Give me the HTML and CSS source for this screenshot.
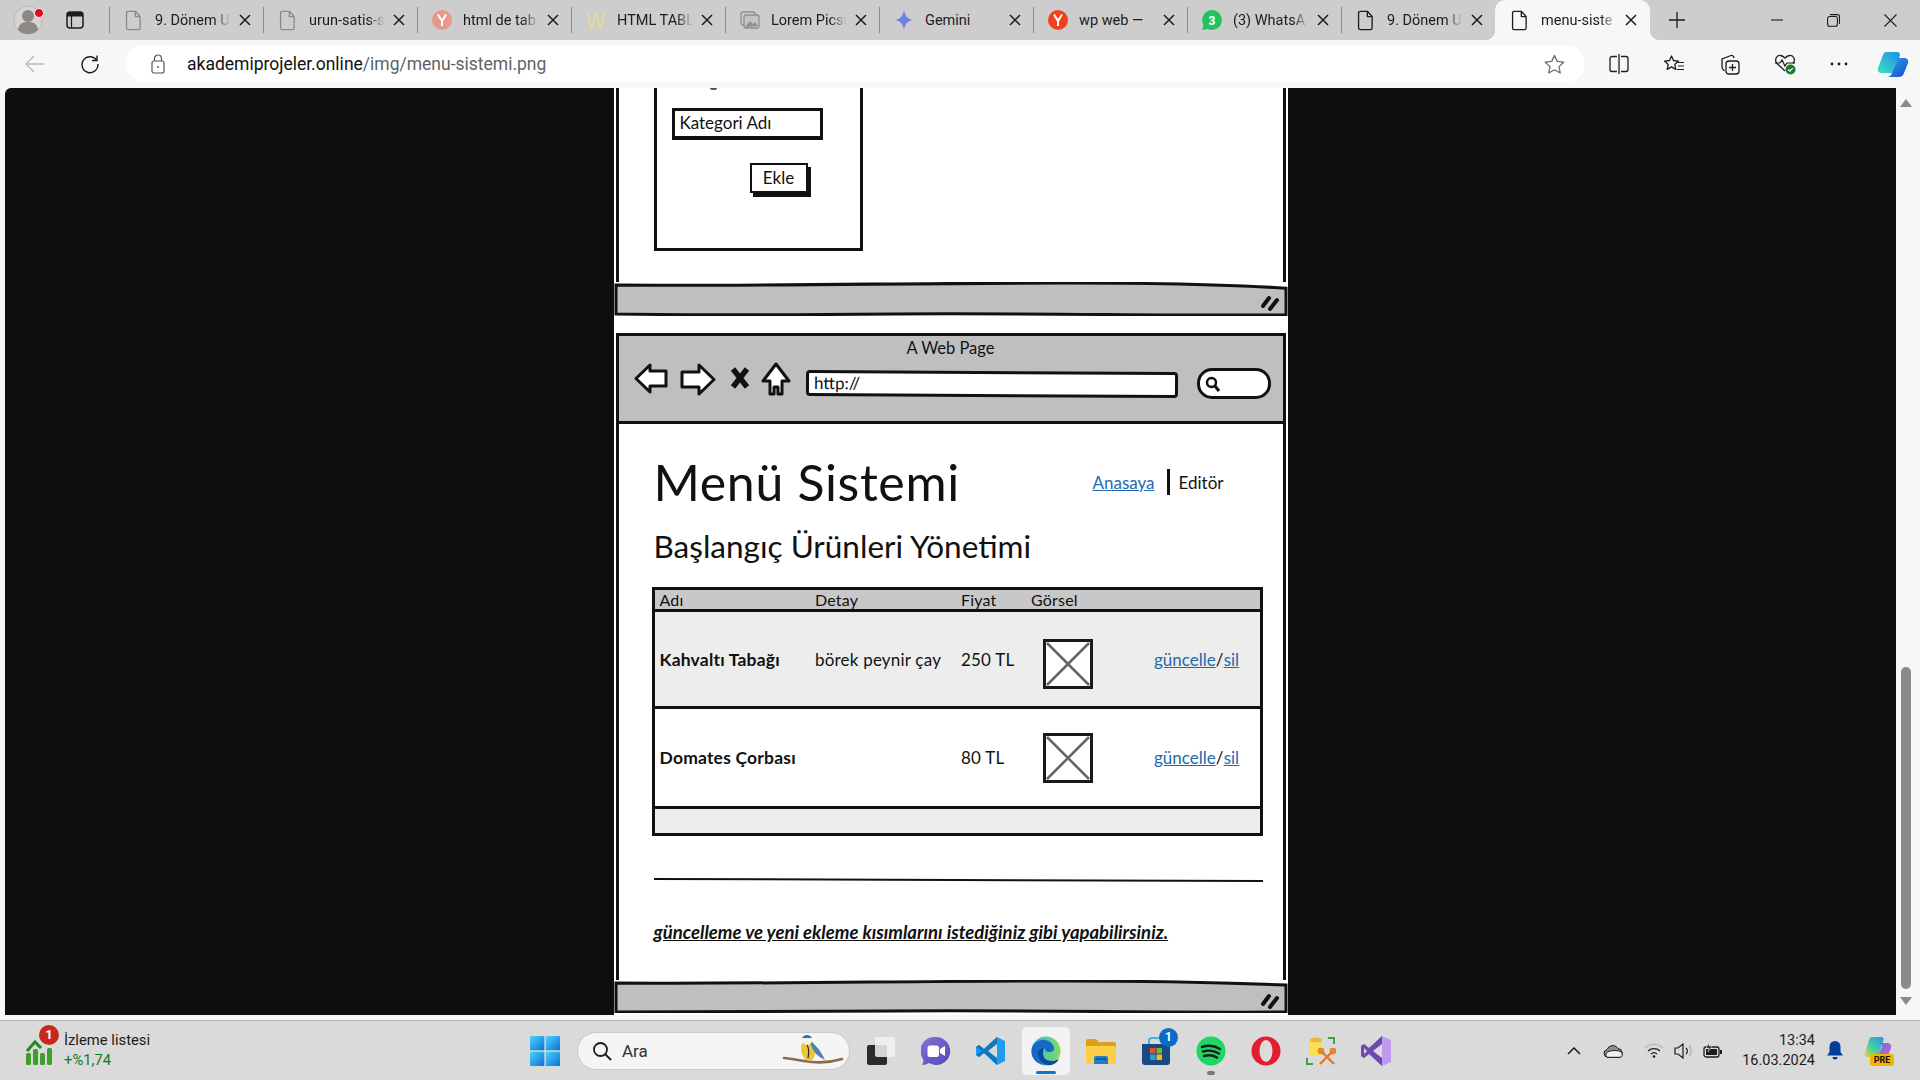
FILE: index.html
```html
<!DOCTYPE html>
<html lang="tr">
<head>
<meta charset="utf-8">
<title>menu-sistemi.png</title>
<link rel="stylesheet" href="styles.css">
</head>
<body>
<svg class="defs" width="0" height="0">
  <symbol id="doc" viewBox="0 0 20 24"><path d="M3.5 1.5h8l5.5 6v13a2 2 0 0 1-2 2H3.500a2 2 0 0 1-2-2v-17a2 2 0 0 1 2-2z M11.500 1.500v6h5.500" fill="none" stroke="currentColor" stroke-width="1.500" stroke-linejoin="round"/></symbol>
  <symbol id="x" viewBox="0 0 12 12"><path d="M1 1l10 10M11 1L1 11" fill="none" stroke="#1c1c1c" stroke-width="1.500"/></symbol>
  <symbol id="imgx" viewBox="0 0 50 50"><rect x="1.500" y="1.500" width="47" height="47" fill="#fff" stroke="#1a1a1a" stroke-width="3"/><path d="M4 4l42 42M46 4L4 46" stroke="#666" stroke-width="2.600" fill="none"/></symbol>
  <symbol id="grip" viewBox="0 0 20 16"><path d="M3 11L9 3M10 14L17 5" stroke="#111" stroke-width="4" fill="none" stroke-linecap="round"/></symbol>
</svg>

<div class="browser">
  <header class="tabstrip">
    <div class="strip-left">
      <div class="profile">
        <svg width="30" height="30" viewBox="0 0 30 30"><circle cx="15" cy="15" r="14" fill="#d6d3d0" stroke="#bdbab7"/><circle cx="15" cy="11" r="6" fill="#8c8885"/><path d="M5 25c1-7 5-8 10-8s9 1 10 8c-3 3-6 4-10 4s-7-1-10-4z" fill="#8c8885"/></svg>
        <span class="dot"></span>
      </div>
      <svg class="sidebar-ico" width="18" height="18" viewBox="0 0 18 18"><rect x="1" y="1" width="16" height="16" rx="3" fill="none" stroke="#1c1c1c" stroke-width="1.500"/><path d="M1 5.500V4a3 3 0 0 1 3-3h10a3 3 0 0 1 3 3v1.500z" fill="#1c1c1c"/><path d="M5.500 5v12" stroke="#1c1c1c" stroke-width="1.200"/></svg>
    </div>
    <div class="tab"><div class="tab-in"><svg class="fav faded" width="17" height="21"><use href="#doc"/></svg><span class="tab-t">9. Dönem U</span><svg class="tab-x" width="12" height="12"><use href="#x"/></svg></div></div>
    <div class="tab"><div class="tab-in"><svg class="fav faded" width="17" height="21"><use href="#doc"/></svg><span class="tab-t">urun-satis-s</span><svg class="tab-x" width="12" height="12"><use href="#x"/></svg></div></div>
    <div class="tab"><div class="tab-in"><svg class="fav" width="20" height="20" viewBox="0 0 20 20"><circle cx="10" cy="10" r="10" fill="#e8988a"/><path d="M6 4.500l4 6.500 4-6.500M10 11v5" stroke="#fff" stroke-width="2" fill="none"/></svg><span class="tab-t">html de tab</span><svg class="tab-x" width="12" height="12"><use href="#x"/></svg></div></div>
    <div class="tab"><div class="tab-in"><svg class="fav" width="20" height="20" viewBox="0 0 20 20"><path d="M1 1l4.500 18L10 4l4.500 15L19 1" stroke="#e8dc90" stroke-width="1.600" fill="none"/></svg><span class="tab-t">HTML TABL</span><svg class="tab-x" width="12" height="12"><use href="#x"/></svg></div></div>
    <div class="tab"><div class="tab-in"><svg class="fav" width="20" height="20" viewBox="0 0 20 20"><rect x="1" y="2" width="14" height="13" rx="2" fill="none" stroke="#8f8f8f" stroke-width="1.300"/><rect x="4" y="5" width="15" height="13" rx="2" fill="#c4c4c4" stroke="#8f8f8f" stroke-width="1.300"/><path d="M5 17l5-6 3 3 2-2 3 4z" fill="#8f8f8f"/></svg><span class="tab-t">Lorem Picsu</span><svg class="tab-x" width="12" height="12"><use href="#x"/></svg></div></div>
    <div class="tab"><div class="tab-in"><svg class="fav" width="20" height="20" viewBox="0 0 20 20"><defs><linearGradient id="gem" x1="0" y1="0" x2="1" y2="1"><stop offset="0" stop-color="#4f8bea"/><stop offset="1" stop-color="#8c78d8"/></linearGradient></defs><path d="M10 0c.8 5.500 3.500 9 8.500 10-5 1-7.700 4.500-8.500 10-.8-5.500-3.500-9-8.500-10 5-1 7.700-4.500 8.500-10z" fill="url(#gem)"/></svg><span class="tab-t plain">Gemini</span><svg class="tab-x" width="12" height="12"><use href="#x"/></svg></div></div>
    <div class="tab"><div class="tab-in"><svg class="fav" width="20" height="20" viewBox="0 0 20 20"><circle cx="10" cy="10" r="10" fill="#f0401c"/><path d="M6 4.500l4 6.500 4-6.500M10 11v5" stroke="#fff" stroke-width="2" fill="none"/></svg><span class="tab-t plain">wp web —</span><svg class="tab-x" width="12" height="12"><use href="#x"/></svg></div></div>
    <div class="tab"><div class="tab-in"><svg class="fav" width="20" height="20" viewBox="0 0 20 20"><path d="M10 0a10 10 0 0 1 0 20 10 10 0 0 1-4.500-1L0 20l1.500-5A10 10 0 0 1 10 0z" fill="#22c35e"/><text x="10" y="14.500" class="wa-num">3</text></svg><span class="tab-t">(3) WhatsA</span><svg class="tab-x" width="12" height="12"><use href="#x"/></svg></div></div>
    <div class="tab"><div class="tab-in"><svg class="fav dark" width="17" height="21"><use href="#doc"/></svg><span class="tab-t">9. Dönem U</span><svg class="tab-x" width="12" height="12"><use href="#x"/></svg></div></div>
    <div class="tab active"><div class="tab-in"><svg class="fav dark" width="17" height="21"><use href="#doc"/></svg><span class="tab-t">menu-siste</span><svg class="tab-x" width="12" height="12"><use href="#x"/></svg></div></div>
    <svg class="plus" width="16" height="16" viewBox="0 0 16 16"><path d="M8 0v16M0 8h16" stroke="#1c1c1c" stroke-width="1.300"/></svg>
    <div class="winctl">
      <svg width="12" height="12" viewBox="0 0 12 12"><path d="M0 6h12" stroke="#1c1c1c" stroke-width="1.100"/></svg>
      <svg width="13" height="13" viewBox="0 0 13 13"><rect x=".6" y="2.500" width="9.800" height="9.800" rx="2" fill="none" stroke="#1c1c1c" stroke-width="1.100"/><path d="M3 .6h7.500a2 2 0 0 1 2 2V10" fill="none" stroke="#1c1c1c" stroke-width="1.100"/></svg>
      <svg width="13" height="13" viewBox="0 0 13 13"><path d="M.5.500l12 12M12.500.500l-12 12" stroke="#1c1c1c" stroke-width="1.100"/></svg>
    </div>
  </header>

  <div class="toolbar">
    <svg class="tool-back" width="20" height="18" viewBox="0 0 20 18"><path d="M9 1L1 9l8 8M1 9h18" fill="none" stroke="#bcbcbc" stroke-width="1.400"/></svg>
    <svg class="tool-reload" width="20" height="20" viewBox="0 0 20 20"><path d="M16.500 6A8 8 0 1 0 18 10" fill="none" stroke="#1c1c1c" stroke-width="1.400"/><path d="M17 1.500V6.500h-5" fill="none" stroke="#1c1c1c" stroke-width="1.400"/></svg>
    <div class="address">
      <svg width="14" height="20" viewBox="0 0 14 20"><rect x="1" y="7" width="12" height="12" rx="2" fill="none" stroke="#555" stroke-width="1.200"/><path d="M3.500 7V4.500a3.500 3.500 0 0 1 7 0V7" fill="none" stroke="#555" stroke-width="1.200"/><circle cx="7" cy="13" r="1" fill="#555"/></svg>
      <span class="url"><b>akademiprojeler.online</b>/img/menu-sistemi.png</span>
      <svg class="star" width="21" height="20" viewBox="0 0 21 20"><path d="M10.500 1.500l2.800 5.900 6.400.8-4.700 4.400 1.200 6.400-5.700-3.200-5.700 3.200 1.200-6.400L1.300 8.200l6.400-.8z" fill="none" stroke="#6b6b6b" stroke-width="1.300" stroke-linejoin="round"/></svg>
    </div>
    <div class="tool-icons">
      <svg width="20" height="20" viewBox="0 0 20 20"><path d="M8 2.500H3a2 2 0 0 0-2 2v11a2 2 0 0 0 2 2h5M12 2.500h5a2 2 0 0 1 2 2v11a2 2 0 0 1-2 2h-5M10 0v20" fill="none" stroke="#1c1c1c" stroke-width="1.300"/></svg>
      <svg width="22" height="20" viewBox="0 0 22 20"><path d="M8.500 2l2 4.500 5 .6-3.700 3.300 1 5-4.300-2.500-4.300 2.500 1-5L1.500 7.100l5-.6z" fill="none" stroke="#1c1c1c" stroke-width="1.300" stroke-linejoin="round"/><path d="M15 8.500h6M15 12h6M14 15.500h7" stroke="#1c1c1c" stroke-width="1.200"/></svg>
      <svg width="21" height="21" viewBox="0 0 21 21"><path d="M3 13V5l9-3.500a2 2 0 0 1 2.400 1l.6 1.500" fill="none" stroke="#1c1c1c" stroke-width="1.300"/><path d="M3 13c0 2 1 3 2.500 4" fill="none" stroke="#1c1c1c" stroke-width="1.300"/><rect x="7" y="7" width="13" height="13" rx="3" fill="none" stroke="#1c1c1c" stroke-width="1.300"/><path d="M13.500 10v7M10 13.500h7" stroke="#1c1c1c" stroke-width="1.300"/></svg>
      <svg width="22" height="22" viewBox="0 0 22 22"><path d="M11 18L3 10.500C0 7 2.500 2 6.500 2.500 8.500 2.700 10 4 11 5c1-1 2.500-2.300 4.500-2.500C19.500 2 22 7 19 10.500" fill="none" stroke="#1c1c1c" stroke-width="1.300"/><path d="M1 10h5l2-3 3 6 2-3h8" fill="none" stroke="#1c1c1c" stroke-width="1.200"/><circle cx="16.500" cy="16.500" r="5" fill="#157f2f"/><path d="M14.200 16.500l1.700 1.700 2.900-3" fill="none" stroke="#fff" stroke-width="1.200"/></svg>
      <svg width="18" height="4" viewBox="0 0 18 4"><circle cx="2" cy="2" r="1.400" fill="#1c1c1c"/><circle cx="9" cy="2" r="1.400" fill="#1c1c1c"/><circle cx="16" cy="2" r="1.400" fill="#1c1c1c"/></svg>
      <svg class="copilot" width="32" height="28" viewBox="0 0 32 28"><defs><linearGradient id="cpa" x1="0" y1="1" x2="1" y2="0"><stop offset="0" stop-color="#3ddfc0"/><stop offset="1" stop-color="#1f8fe8"/></linearGradient><linearGradient id="cpb" x1="0" y1="0" x2="1" y2="1"><stop offset="0" stop-color="#30a8f0"/><stop offset="1" stop-color="#1a48c8"/></linearGradient></defs><path d="M9 2h11c2 0 3 1 3 3l-5 15c-1 2-2 3-4 3H5c-3 0-5-2-4-5L6 5c.5-2 1.500-3 3-3z" fill="url(#cpa)"/><path d="M16 8h11c3 0 5 2 4 5l-4 10c-1 3-3 4-6 4H9c3 0 5-1 6-4l5-11c.5-2-1-4-4-4z" fill="url(#cpb)"/></svg>
    </div>
  </div>

  <main class="viewport">
    <div class="stage">
      <div class="shot">
        <section class="win-top">
          <div class="win-top-body">
            <div class="panel">
              <div class="panel-mark"></div>
              <div class="sk-input">Kategori Adı</div>
              <div class="sk-btn">Ekle</div>
            </div>
          </div>
          <div class="sk-footer">
            <svg class="sk-footer-bg" viewBox="0 0 674 33" preserveAspectRatio="none"><path d="M2 3C150 4 300 1 450 1 540 1 620 3 672 6V32C560 33 420 30 280 31 170 32 70 32 2 31z" fill="#bfbfbf" stroke="#111" stroke-width="3"/></svg>
            <svg class="grip" width="20" height="16"><use href="#grip"/></svg>
          </div>
        </section>

        <section class="win-main">
          <div class="sk-head">
            <div class="sk-title">A Web Page</div>
            <div class="sk-nav">
              <svg class="n-back" width="34" height="31" viewBox="0 0 34 31"><path d="M2 15.500L16 2v6h16v15H16v6z" fill="#fff" stroke="#111" stroke-width="3" stroke-linejoin="round"/></svg>
              <svg class="n-fwd" width="36" height="33" viewBox="0 0 36 33"><path d="M34 16.500L19 2v7H2v15h17v7z" fill="#fff" stroke="#111" stroke-width="3" stroke-linejoin="round"/></svg>
              <svg class="n-stop" width="20" height="22" viewBox="0 0 20 22"><path d="M3 2l14 18M17 2L3 20" stroke="#111" stroke-width="5.500" fill="none"/></svg>
              <svg class="n-home" width="30" height="34" viewBox="0 0 30 34"><path d="M15 2L28 19h-7v13h-4v-7h-4v7H9V19H2z" fill="#fff" stroke="#111" stroke-width="3" stroke-linejoin="round"/></svg>
              <div class="sk-url">http://</div>
              <div class="sk-search"><svg width="16" height="16" viewBox="0 0 16 16"><circle cx="6.500" cy="6.500" r="4.500" fill="none" stroke="#111" stroke-width="2.500"/><path d="M10 10l4 5" stroke="#111" stroke-width="3"/></svg></div>
            </div>
          </div>
          <div class="sk-body">
            <div class="title-row">
              <h1>Menü Sistemi</h1>
              <nav class="crumbs"><a class="link">Anasaya</a><span class="crumb-sep"></span><span class="crumb-cur">Editör</span></nav>
            </div>
            <h2>Başlangıç Ürünleri Yönetimi</h2>
            <table class="sk-table">
              <colgroup><col class="c1"><col class="c2"><col class="c3"><col class="c4"><col class="c5"></colgroup>
              <thead><tr><th>Adı</th><th>Detay</th><th>Fiyat</th><th>Görsel</th><th></th></tr></thead>
              <tbody>
                <tr class="r-a"><td class="name">Kahvaltı Tabağı</td><td>börek peynir çay</td><td>250 TL</td><td class="imgcell"><svg class="ph ph-low" width="50" height="50"><use href="#imgx"/></svg></td><td><a class="link">güncelle</a>/<a class="link">sil</a></td></tr>
                <tr class="r-b"><td class="name">Domates Çorbası</td><td></td><td>80 TL</td><td class="imgcell"><svg class="ph" width="50" height="50"><use href="#imgx"/></svg></td><td><a class="link">güncelle</a>/<a class="link">sil</a></td></tr>
              </tbody>
              <tfoot><tr class="r-f"><td colspan="5"></td></tr></tfoot>
            </table>
            <div class="sk-hr"></div>
            <p class="sk-note">güncelleme ve yeni ekleme kısımlarını istediğiniz gibi yapabilirsiniz.</p>
          </div>
          <div class="sk-footer short">
            <svg class="sk-footer-bg" viewBox="0 0 674 33" preserveAspectRatio="none"><path d="M2 3C150 4 300 1 450 1 540 1 620 3 672 5V32C560 33 420 30 280 31 170 32 70 32 2 32z" fill="#bfbfbf" stroke="#111" stroke-width="3"/></svg>
            <svg class="grip" width="20" height="16"><use href="#grip"/></svg>
          </div>
        </section>
      </div>
    </div>
    <aside class="scrollbar">
      <span class="arrow up"></span>
      <span class="thumb"></span>
      <span class="arrow down"></span>
    </aside>
  </main>

  <footer class="taskbar">
    <div class="widget">
      <div class="widget-ico">
        <svg width="30" height="26" viewBox="0 0 30 26"><path d="M2 12L10 3l6 6" fill="none" stroke="#1e8a24" stroke-width="3"/><rect x="1" y="14" width="5" height="12" rx="1.500" fill="#3f9f2a"/><rect x="8" y="10" width="5" height="16" rx="1.500" fill="#3f9f2a"/><rect x="15" y="14" width="5" height="12" rx="1.500" fill="#3f9f2a"/><rect x="22" y="9" width="5" height="17" rx="1.500" fill="#3f9f2a"/></svg>
        <span class="w-badge">1</span>
      </div>
      <div class="widget-t"><span>İzleme listesi</span><span class="up">+%1,74</span></div>
    </div>
    <div class="center">
      <svg class="start" width="30" height="30" viewBox="0 0 30 30"><defs><linearGradient id="win" x1="0" y1="0" x2="1" y2="1"><stop offset="0" stop-color="#4fd0fa"/><stop offset="1" stop-color="#0a74d8"/></linearGradient></defs><rect width="14.300" height="14.300" fill="url(#win)"/><rect x="15.700" width="14.300" height="14.300" fill="url(#win)"/><rect y="15.700" width="14.300" height="14.300" fill="url(#win)"/><rect x="15.700" y="15.700" width="14.300" height="14.300" fill="url(#win)"/></svg>
      <div class="search">
        <svg width="20" height="20" viewBox="0 0 20 20"><circle cx="8.500" cy="8.500" r="6.500" fill="none" stroke="#1c1c1c" stroke-width="1.800"/><path d="M13 13l6 6" stroke="#1c1c1c" stroke-width="2"/></svg>
        <span>Ara</span>
        <svg class="bird" width="62" height="34" viewBox="0 0 62 34"><path d="M2 24c10 1 18 3 28 4 10 1 20 0 30-3" fill="none" stroke="#8a6a4c" stroke-width="2.500" stroke-linecap="round"/><path d="M20 10c2-4 8-5 11-1 3 5 3 12 0 16-2 2-6 2-8 0-4-4-5-11-3-15z" fill="#e8c83a"/><path d="M28 7c5 3 11 10 15 19l-5-3c-5-3-9-9-10-16z" fill="#4f7fb8"/><circle cx="25" cy="6" r="5" fill="#f3f1e6"/><path d="M20 4c2-4 8-4 10 0z" fill="#2f6fb8"/><path d="M25 11c2 3 2 8 1 13" stroke="#2b2b2b" stroke-width="1.300" fill="none"/></svg>
      </div>
      <div class="apps">
        <div class="app"><svg width="28" height="28" viewBox="0 0 28 28"><rect x="0" y="8" width="20" height="20" rx="2" fill="#2b2b2b"/><rect x="8" y="0" width="20" height="20" rx="2" fill="#f2f2f2" opacity=".85"/></svg></div>
        <div class="app"><svg width="30" height="30" viewBox="0 0 30 30"><defs><linearGradient id="chat" x1="0" y1="0" x2="1" y2="1"><stop offset="0" stop-color="#8a70d8"/><stop offset="1" stop-color="#4f4ab8"/></linearGradient></defs><path d="M15 1a14 14 0 1 1-7 26c-2 1-4 2-7 2 1-2 2-4 1-6A14 14 0 0 1 15 1z" fill="url(#chat)"/><rect x="6.500" y="9.500" width="11.500" height="11.500" rx="2.500" fill="#fff"/><path d="M19 13l5-3v10l-5-3z" fill="#fff"/></svg></div>
        <div class="app"><svg width="30" height="30" viewBox="0 0 30 30"><path d="M21 1l8 4v20l-8 4L8 17 3 21l-3-2v-8l3-2 5 4z" fill="#1f9cf0"/><path d="M21 1L8 13 3 9l-3 2 5.500 4L0 19l3 2 5-4 13 12z" fill="#0b78c4"/><path d="M21 8v14l-9-7z" fill="#d9d9d9"/></svg></div>
        <div class="app current"><svg width="30" height="30" viewBox="0 0 30 30"><defs><linearGradient id="eg1" x1="0" y1="0" x2="1" y2="0"><stop offset="0" stop-color="#35b8e8"/><stop offset="1" stop-color="#7fdc58"/></linearGradient></defs><circle cx="15" cy="15" r="14.500" fill="url(#eg1)"/><path d="M.5 15C1 7 8 3 14 4c6 1 9 5 9 9 0 2-2 3-5 3-4 0-3-3-5-4-5-1-8 5-5 11 1 3 4 6 8 6C7 29 0 23 .5 15z" fill="#1668c4"/><path d="M13 12c-5-1-8 5-5 11 2 5 9 8 15 5 2-1 4-3 5-5-3 2-8 3-12 1-4-2-5-6-3-12z" fill="#0d4a9c"/></svg></div>
        <div class="app"><svg width="30" height="26" viewBox="0 0 30 26"><path d="M0 3a2 2 0 0 1 2-2h8l3 3h15a2 2 0 0 1 2 2v4H0z" fill="#dca11c"/><path d="M0 8h28a2 2 0 0 1 2 2v14a2 2 0 0 1-2 2H2a2 2 0 0 1-2-2z" fill="#fcce4a"/><path d="M8 20a2 2 0 0 1 2-2h10a2 2 0 0 1 2 2v6H8z" fill="#1a7fcc"/><path d="M10 21h10" stroke="#0f4f88" stroke-width="1.500"/></svg></div>
        <div class="app"><svg width="30" height="30" viewBox="0 0 30 30"><path d="M1 8h28v18a3 3 0 0 1-3 3H4a3 3 0 0 1-3-3z" fill="#1a4a80"/><path d="M8 8V5a3 3 0 0 1 3-3h8" fill="none" stroke="#3fb0f0" stroke-width="2"/><rect x="9" y="12" width="5.500" height="5.500" fill="#e8502a"/><rect x="15.500" y="12" width="5.500" height="5.500" fill="#74b82a"/><rect x="9" y="18.500" width="5.500" height="5.500" fill="#1fa2e8"/><rect x="15.500" y="18.500" width="5.500" height="5.500" fill="#f8b818"/></svg><span class="store-badge">1</span></div>
        <div class="app"><svg width="30" height="30" viewBox="0 0 30 30"><circle cx="15" cy="15" r="14.500" fill="#1ed760"/><path d="M6 11c6-2 13-1 18 2M7 15.500c5-1.500 11-1 16 2M8 20c4-1 9-1 13 1.500" stroke="#1b1b1b" stroke-width="2.400" fill="none" stroke-linecap="round"/></svg><span class="run"></span></div>
        <div class="app"><svg width="30" height="30" viewBox="0 0 30 30"><ellipse cx="15" cy="15" rx="14.500" ry="14.500" fill="#e01f30"/><ellipse cx="15" cy="15" rx="6.500" ry="11" fill="#dcdcdc"/></svg></div>
        <div class="app"><svg width="30" height="30" viewBox="0 0 30 30"><path d="M4 4c0-2 12-2 12 0v14c0 2-12 2-12 0z" fill="#f8e050"/><ellipse cx="10" cy="4" rx="6" ry="2.500" fill="#e8b83a"/><path d="M22 2h6v6M1 22v6h6" fill="none" stroke="#3f9f4a" stroke-width="2"/><path d="M14 14l14 14M28 14L14 28" stroke="#e8781c" stroke-width="2.400"/><circle cx="15" cy="15" r="2.500" fill="none" stroke="#e8781c" stroke-width="1.500"/><circle cx="27" cy="15" r="2.500" fill="none" stroke="#e8781c" stroke-width="1.500"/></svg></div>
        <div class="app"><svg width="30" height="30" viewBox="0 0 30 30"><path d="M21 0l9 4v22l-9 4L8 18l-5 4-3-2V10l3-2 5 4z" fill="#c09af0"/><path d="M21 0L8 12 3 8l-3 2v10l3 2 5-4 13 12z" fill="#6c4ab0"/><path d="M21 8v14l-9-7z" fill="#dadada"/><path d="M3 12v6l3-3z" fill="#dadada"/></svg></div>
      </div>
    </div>
    <div class="tray">
      <svg class="t-chev" width="14" height="8" viewBox="0 0 14 8"><path d="M1 7l6-6 6 6" fill="none" stroke="#1c1c1c" stroke-width="1.500"/></svg>
      <svg class="t-cloud" width="21" height="14" viewBox="0 0 21 14"><path d="M5 13.300a4 4 0 0 1-.8-7.900A6 6 0 0 1 15 4.500a4.500 4.500 0 0 1 1 8.800z" fill="#8f8f8f" stroke="#1c1c1c" stroke-width="1"/><path d="M4 13.300a3.500 3.500 0 0 1 2-6c3-1 9-1 11 0a3.500 3.500 0 0 1 1 6z" fill="#f0f0f0" stroke="#1c1c1c" stroke-width="1"/></svg>
      <svg class="t-wifi" width="20" height="15" viewBox="0 0 20 15"><path d="M1 5a13 13 0 0 1 18 0" fill="none" stroke="#b5b5b5" stroke-width="1.300"/><path d="M4 8a9 9 0 0 1 12 0M7 11a4.500 4.500 0 0 1 6 0" fill="none" stroke="#1c1c1c" stroke-width="1.300"/><circle cx="10" cy="13.500" r="1.300" fill="#1c1c1c"/></svg>
      <svg class="t-vol" width="20" height="16" viewBox="0 0 20 16"><path d="M1 5h3l5-4v14l-5-4H1z" fill="none" stroke="#1c1c1c" stroke-width="1.200"/><path d="M12 5a4 4 0 0 1 0 6" fill="none" stroke="#1c1c1c" stroke-width="1.200"/><path d="M15 2.500a8 8 0 0 1 0 11" fill="none" stroke="#b0b0b0" stroke-width="1.200"/></svg>
      <svg class="t-bat" width="20" height="16" viewBox="0 0 20 16"><rect x="1" y="4" width="15" height="10" rx="2" fill="none" stroke="#1c1c1c" stroke-width="1.300"/><rect x="3" y="6" width="11" height="6" fill="#1c1c1c"/><rect x="17" y="7" width="2" height="4" fill="#1c1c1c"/><path d="M6 0L3 5h3l-1 4 4-6H6z" fill="#1c1c1c" stroke="#dadada" stroke-width=".6"/></svg>
      <div class="clock"><span>13:34</span><span>16.03.2024</span></div>
      <svg class="t-bell" width="16" height="19" viewBox="0 0 16 19"><path d="M8 0a5.500 5.500 0 0 1 5.500 5.500V11l2.500 3.500H0L2.500 11V5.500A5.500 5.500 0 0 1 8 0z" fill="#003f9c"/><path d="M5.500 16a2.500 2.500 0 0 0 5 0z" fill="#003f9c"/></svg>
      <div class="t-copilot">
        <svg width="28" height="24" viewBox="0 0 28 24"><defs><linearGradient id="cq" x1="0" y1="1" x2="1" y2="0"><stop offset="0" stop-color="#f2d03a"/><stop offset=".45" stop-color="#40d0a8"/><stop offset="1" stop-color="#2f90e8"/></linearGradient><linearGradient id="cr" x1="0" y1="0" x2="1" y2="1"><stop offset="0" stop-color="#3f80f0"/><stop offset="1" stop-color="#e85ab8"/></linearGradient></defs><path d="M8 1h9c2 0 3 1 2.500 3L15 18c-1 2-2 3-4 3H4c-3 0-4-2-3-4L5 4c.5-2 1.500-3 3-3z" fill="url(#cq)"/><path d="M14 7h9c3 0 5 2 4 5l-3 8c-1 3-3 4-5 4H8c3 0 5-1 6-4l4-9c.5-2-1-4-4-4z" fill="url(#cr)"/></svg>
        <span class="pre">PRE</span>
      </div>
    </div>
  </footer>
</div>
</body>
</html>
```
FILE: styles.css
```css
* { box-sizing: border-box; }
html, body { margin: 0; padding: 0; }
body { width: 1920px; height: 1080px; overflow: hidden; font-family: Roboto, "Liberation Sans", sans-serif; color: #1c1c1c; background: #f7f7f7; }
.defs { display: block; height: 0; }
.browser { display: flex; flex-direction: column; height: 1080px; }

/* tab strip */
.tabstrip { display: flex; align-items: stretch; height: 40px; background: #cdcdcd; flex: none; }
.strip-left { width: 109px; flex: none; display: flex; align-items: center; padding-left: 13px; }
.profile { position: relative; width: 30px; height: 30px; }
.profile svg { display: block; }
.dot { position: absolute; left: 21px; top: 3px; width: 10px; height: 10px; border-radius: 50%; background: #e00b1c; border: 1px solid #eee; }
.sidebar-ico { margin-left: 23px; }
.tab { width: 154px; flex: none; display: flex; align-items: center; }
.tab-in { width: 100%; height: 26px; border-left: 1px solid #8b8b8b; display: flex; align-items: center; padding-left: 14px; font-size: 14.500px; }
.fav { flex: none; width: 20px; }
.fav.faded { color: #8a8a8a; }
.fav.dark { color: #1c1c1c; }
.tab-t { width: 76px; margin: 0 6px 0 11px; white-space: nowrap; -webkit-mask-image: linear-gradient(90deg, #000 78%, transparent 100%); mask-image: linear-gradient(90deg, #000 78%, transparent 100%); }
.tab-t.plain { -webkit-mask-image: none; mask-image: none; }
.tab-x { flex: none; margin-left: 2px; }
.wa-num { font: 700 12px Roboto, sans-serif; fill: #fff; text-anchor: middle; }
.tab.active { width: 155px; background: #f7f7f7; border-radius: 10px 10px 0 0; position: relative; }
.tab.active .tab-in { border-left: 0; padding-left: 15px; }
.tab.active::before, .tab.active::after { content: ""; position: absolute; bottom: 0; width: 10px; height: 10px; }
.tab.active::before { left: -10px; background: radial-gradient(circle at 0 0, transparent 10px, #f7f7f7 10.500px); }
.tab.active::after { right: -10px; background: radial-gradient(circle at 100% 0, transparent 10px, #f7f7f7 10.500px); }
.plus { align-self: center; margin-left: 19px; flex: none; }
.winctl { margin-left: auto; display: flex; align-items: center; padding-right: 23px; gap: 44px; }

/* toolbar */
.toolbar { height: 48px; flex: none; background: #f7f7f7; display: flex; align-items: center; padding-left: 25px; }
.tool-back { flex: none; }
.tool-reload { flex: none; margin-left: 35px; }
.address { width: 1459px; height: 37px; margin-left: 26px; margin-top: -1px; background: #fff; border-radius: 19px; display: flex; align-items: center; padding-left: 25px; padding-right: 20px; flex: none; }
.url { margin-left: 22px; font-size: 17.500px; color: #5f6368; white-space: nowrap; }
.url b { font-weight: 400; color: #111; }
.star { margin-left: auto; }
.tool-icons { display: flex; align-items: center; margin-left: 24px; gap: 34px; }
.tool-icons svg { flex: none; }
.copilot { margin-left: -5px; }

/* viewport */
.viewport { height: 927px; flex: none; display: flex; padding-left: 5px; background: #f7f7f7; }
.stage { width: 1891px; height: 927px; background: #0e0e0e; border-radius: 6px 0 0 0; display: flex; justify-content: center; overflow: hidden; }
.shot { width: 674px; height: 927px; background: #fff; display: flex; flex-direction: column; color: #111; font-family: Lato, "Noto Sans", sans-serif; }
.scrollbar { width: 24px; height: 927px; display: flex; flex-direction: column; align-items: center; padding-right: 4px; background: #f7f7f7; }
.arrow { width: 0; height: 0; border-left: 6px solid transparent; border-right: 6px solid transparent; }
.arrow.up { border-bottom: 8px solid #8a8a8a; margin-top: 11px; }
.thumb { width: 10px; height: 322px; background: #8a8a8a; border-radius: 5px; margin-top: 560px; }
.arrow.down { border-top: 8px solid #8a8a8a; margin-top: 8px; }

/* wireframe */
.win-top { flex: none; height: 228px; display: flex; flex-direction: column; }
.win-top-body { height: 194px; margin: 0 2px; border-left: 3px solid #111; border-right: 3px solid #111; padding-left: 35px; flex: none; }
.panel { width: 209px; height: 163px; border: 3px solid #111; border-top: 0; overflow: hidden; padding-left: 14px; }
.panel-mark { width: 7px; height: 2px; margin-left: 39px; background: #555; border-radius: 0 0 4px 4px; }
.sk-input { width: 151px; height: 32px; margin: 18px 0 0 1px; border: 3px solid #111; border-bottom-width: 4px; font-size: 17px; line-height: 23px; padding-left: 5px; white-space: nowrap; }
.sk-btn { width: 58px; height: 30px; margin: 23px 0 0 79px; border: 2px solid #111; box-shadow: 3px 4px 0 #111; font-size: 17px; line-height: 25px; text-align: center; }
.sk-footer { position: relative; height: 34px; flex: none; }
.sk-footer.short { height: 33px; }
.sk-footer-bg { position: absolute; left: 0; top: 0; width: 674px; height: 100%; }
.grip { position: absolute; right: 8px; top: 13px; }

.win-main { margin-top: 17px; flex: none; display: flex; flex-direction: column; }
.sk-head { height: 91px; margin: 0 2px; background: #bfbfbf; border: 3px solid #111; display: flex; flex-direction: column; }
.sk-title { height: 26px; line-height: 24px; text-align: center; font-size: 16.500px; }
.sk-nav { display: flex; align-items: flex-start; padding-left: 15px; }
.n-back { margin-top: 1px; }
.n-fwd { margin-top: 1px; margin-left: 12px; }
.n-stop { margin-top: 5px; margin-left: 14px; }
.n-home { margin-top: 0; margin-left: 11px; }
.sk-url { width: 372px; height: 26px; margin-left: 15px; margin-top: 9px; background: #fff; border: 3px solid #111; border-radius: 4px; font-size: 17px; line-height: 19px; padding-left: 5px; transform: rotate(.3deg); }
.sk-search { width: 74px; height: 31px; margin-left: 19px; margin-top: 6px; background: #fff; border: 3px solid #111; border-radius: 15px; display: flex; align-items: center; padding-left: 5px; }
.sk-body { height: 556px; margin: 0 2px; border-left: 3px solid #111; border-right: 3px solid #111; padding-left: 35px; display: flex; flex-direction: column; }
.title-row { display: flex; align-items: center; height: 60px; margin-top: 28px; }
h1 { margin: 0; width: 439px; flex: none; font-size: 50px; letter-spacing: .65px; font-weight: 400; line-height: 60px; white-space: nowrap; }
.crumbs { display: flex; align-items: center; font-size: 17px; }
.crumb-sep { width: 3px; height: 26px; background: #111; margin: 0 9px 0 12px; }
.link { color: #2468b0; text-decoration: underline; letter-spacing: 0; }
h2 { margin: 15px 0 0; font-size: 31.500px; font-weight: 400; line-height: 39px; white-space: nowrap; }
.sk-table { margin: 21px 0 0 -2px; width: 608px; table-layout: fixed; border-collapse: collapse; border: 3px solid #111; font-size: 17px; letter-spacing: .2px; flex: none; }
.c1 { width: 157px; } .c2 { width: 146px; } .c3 { width: 70px; } .c4 { width: 123px; } .c5 { width: 112px; }
.sk-table th { height: 22px; padding: 0 0 0 5px; font-weight: 400; font-size: 16px; text-align: left; background: #c8c8c8; line-height: 18px; border-bottom: 3px solid #111; }
.sk-table td { padding: 0 0 0 5px; white-space: nowrap; }
.name { font-weight: 700; font-size: 17.500px; }
.r-a { height: 97px; background: #ededed; border-bottom: 3px solid #111; }
.r-b { height: 100px; background: #fff; border-bottom: 3px solid #111; }
.r-f { height: 27px; background: #ededed; }
.imgcell { padding-left: 17px !important; }
.ph { display: block; margin-left: 0; }
.ph-low { margin-top: 9px; }
.sk-hr { height: 2px; width: 609px; margin-top: 43px; background: #111; transform: rotate(.2deg); flex: none; }
.sk-note { margin: 41px 0 0; font-size: 18.500px; font-weight: 700; font-style: italic; text-decoration: underline; line-height: 20px; white-space: nowrap; }

/* taskbar */
.taskbar { margin-top: 5px; height: 60px; flex: none; background: #dadada; border-top: 1px solid #b8b8b8; display: flex; align-items: center; position: relative; }
.widget { width: 515px; flex: none; display: flex; align-items: center; padding-left: 25px; }
.widget-ico { position: relative; width: 30px; height: 26px; margin-top: 2px; }
.widget-ico svg { display: block; }
.w-badge { position: absolute; left: 14px; top: -14px; width: 20px; height: 20px; border-radius: 50%; background: #c8281e; color: #fff; font-size: 13px; font-weight: 700; line-height: 20px; text-align: center; }
.widget-t { display: flex; flex-direction: column; margin: -2px 0 0 9px; font-size: 14.800px; line-height: 20px; }
.widget-t .up { color: #107c10; }
.center { display: flex; align-items: center; flex: none; }
.start { margin-left: 15px; }
.search { width: 273px; height: 38px; margin-left: 17px; background: #f5f5f5; border-radius: 19px; border: 1px solid #c8c8c8; display: flex; align-items: center; padding-left: 14px; font-size: 17px; color: #333; }
.search span { margin-left: 10px; }
.bird { margin-left: auto; margin-right: 5px; }
.apps { display: flex; align-items: center; margin-left: 7px; gap: 7px; }
.app { position: relative; width: 48px; height: 48px; border-radius: 5px; display: flex; align-items: center; justify-content: center; }
.app.current { background: #f2f2f2; }
.app.current::after { content: ""; position: absolute; left: 14px; bottom: 1px; width: 20px; height: 3px; border-radius: 2px; background: #0a74d8; }
.run { position: absolute; left: 20px; bottom: 0; width: 8px; height: 4px; border-radius: 2px; background: #7a7a7a; }
.store-badge { position: absolute; left: 27px; top: 1px; width: 19px; height: 19px; border-radius: 50%; background: #0a6cc8; color: #fff; font-size: 12px; font-weight: 700; line-height: 19px; text-align: center; }
.tray { display: flex; align-items: center; margin-left: auto; padding-right: 28px; }
.t-chev { margin-right: 22px; }
.t-cloud { margin-right: 20px; }
.t-wifi { margin-right: 10px; }
.t-vol { margin-right: 9px; }
.t-bat { margin-right: 0; }
.clock { width: 92px; display: flex; flex-direction: column; align-items: flex-end; font-size: 14.500px; line-height: 20px; color: #1c1c1c; }
.t-bell { margin-left: 12px; }
.t-copilot { position: relative; width: 28px; height: 30px; margin-left: 21px; }
.t-copilot svg { display: block; }
.pre { position: absolute; left: 6px; top: 18px; width: 24px; height: 12px; border-radius: 3px; background: #f4b400; color: #111; font-size: 9px; font-weight: 700; line-height: 12px; text-align: center; }
```
